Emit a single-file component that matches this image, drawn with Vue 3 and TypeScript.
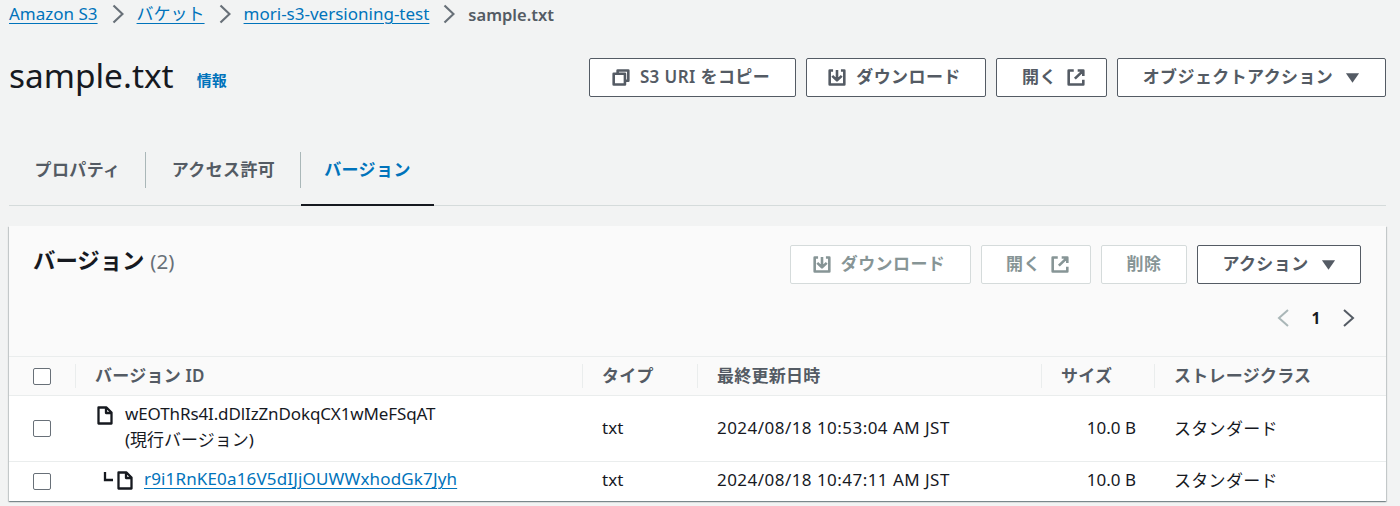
<script setup lang="ts">
interface Row { id: string; current: boolean; date: string }
const rows: Row[] = [
  { id: 'wEOThRs4I.dDlIzZnDokqCX1wMeFSqAT', current: true, date: '2024/08/18 10:53:04 AM JST' },
  { id: 'r9i1RnKE0a16V5dIJjOUWWxhodGk7Jyh', current: false, date: '2024/08/18 10:47:11 AM JST' },
]
</script>

<template>
  <div class="page">
    <nav class="crumbs">
      <a class="crumb">Amazon S3</a>
      <svg class="sep" viewBox="0 0 12 20"><path d="M1.500 1.500L10.500 10l-9 8.500" /></svg>
      <a class="crumb">バケット</a>
      <svg class="sep" viewBox="0 0 12 20"><path d="M1.500 1.500L10.500 10l-9 8.500" /></svg>
      <a class="crumb">mori-s3-versioning-test</a>
      <svg class="sep" viewBox="0 0 12 20"><path d="M1.500 1.500L10.500 10l-9 8.500" /></svg>
      <span class="crumb-current">sample.txt</span>
    </nav>

    <header class="head">
      <div class="title-wrap">
        <h1>sample.txt</h1>
        <a class="info">情報</a>
      </div>
      <div class="actions">
        <button class="btn w-copy">
          <svg class="ic" viewBox="0 0 16 16" preserveAspectRatio="none"><path d="M5 4.500V1.500h9.500V11H11.500M1.500 4.500h10v10h-10z" /></svg>
          <span>S3 URI をコピー</span>
        </button>
        <button class="btn w-dl">
          <svg class="ic" viewBox="0 0 16 16" preserveAspectRatio="none"><path d="M4.500 1.500h-3v13h13v-13h-3M8 1v9.500M3.800 6.500L8 10.700l4.200-4.200" /></svg>
          <span>ダウンロード</span>
        </button>
        <button class="btn w-open">
          <span>開く</span>
          <svg class="ic" viewBox="0 0 16 16" preserveAspectRatio="none"><path d="M6 1.500H1.500v13h13V10M9.500 1.500h5v5M14 2L7 9" /></svg>
        </button>
        <button class="btn w-obj">
          <span>オブジェクトアクション</span>
          <svg class="caret" viewBox="0 0 16 10"><path d="M1 0h14L8 10z" /></svg>
        </button>
      </div>
    </header>

    <div class="tabs">
      <div class="tab tab-a"><span>プロパティ</span></div>
      <div class="tab tab-b"><span>アクセス許可</span></div>
      <div class="tab tab-c active"><span>バージョン</span></div>
    </div>

    <section class="card">
      <div class="card-head">
        <h2>バージョン <span class="count">(2)</span></h2>
        <div class="card-actions">
          <button class="btn off w-dl2">
            <svg class="ic" viewBox="0 0 16 16" preserveAspectRatio="none"><path d="M4.500 1.500h-3v13h13v-13h-3M8 1v9.500M3.800 6.500L8 10.700l4.200-4.200" /></svg>
            <span>ダウンロード</span>
          </button>
          <button class="btn off w-open2">
            <span>開く</span>
            <svg class="ic" viewBox="0 0 16 16" preserveAspectRatio="none"><path d="M6 1.500H1.500v13h13V10M9.500 1.500h5v5M14 2L7 9" /></svg>
          </button>
          <button class="btn off w-del"><span>削除</span></button>
          <button class="btn w-act">
            <span>アクション</span>
            <svg class="caret" viewBox="0 0 16 10"><path d="M1 0h14L8 10z" /></svg>
          </button>
        </div>
      </div>

      <div class="pager">
        <svg class="pg off-pg" viewBox="0 0 14 20"><path d="M12 2L3 10l9 8" /></svg>
        <span class="pg-num">1</span>
        <svg class="pg" viewBox="0 0 14 20"><path d="M2 2l9 8-9 8" /></svg>
      </div>

      <div class="grid thead">
        <div class="cell sel"><i class="check"></i></div>
        <div class="cell th first">バージョン ID</div>
        <div class="cell th">タイプ</div>
        <div class="cell th">最終更新日時</div>
        <div class="cell th">サイズ</div>
        <div class="cell th">ストレージクラス</div>
      </div>

      <div v-for="r in rows" :key="r.id" class="grid row" :class="{ tall: r.current }">
        <div class="cell sel"><i class="check"></i></div>
        <div class="cell idcell" :class="{ child: !r.current }">
          <svg v-if="!r.current" class="elbow" viewBox="0 0 10 10"><path d="M2 0v8h8" /></svg>
          <svg class="file" viewBox="0 0 16 19"><path d="M1.500 1.500h8l5 5v11h-13zM9 1.500v5.500h5.500" /></svg>
          <div v-if="r.current" class="idtext">{{ r.id }}<br /><span class="cur">(現行バージョン)</span></div>
          <a v-else class="idlink">{{ r.id }}</a>
        </div>
        <div class="cell td">txt</div>
        <div class="cell td date">{{ r.date }}</div>
        <div class="cell td size">10.0 B</div>
        <div class="cell td cls">スタンダード</div>
      </div>
    </section>
  </div>
</template>

<style>
html, body { margin: 0; background: #f2f3f3; }
</style>

<style scoped>
.page {
  width: 1400px;
  height: 506px;
  box-sizing: border-box;
  padding: 0 14px 0 9px;
  background: #f2f3f3;
  overflow: hidden;
  color: #16191f;
  font-family: "Noto Sans", "Noto Sans CJK JP", sans-serif;
  font-size: 17px;
}
.crumbs { display: flex; align-items: center; height: 28px; }
.crumb { color: #0073bb; text-decoration: underline; text-underline-offset: 3px; text-decoration-thickness: 1px; line-height: 22px; }
.crumb-current { color: #545b64; font-weight: 600; font-size: 16.500px; }
.sep { width: 12px; height: 20px; margin: 0 13px 0 14px; fill: none; stroke: #687078; stroke-width: 2.200; }
.head { display: flex; justify-content: space-between; align-items: flex-start; padding-top: 30px; height: 68px; }
.title-wrap { display: flex; align-items: flex-start; }
h1 { margin: -2px 0 0; font-size: 33.400px; font-weight: 400; line-height: 38px; }
.info { color: #0073bb; font-size: 15px; font-weight: 600; line-height: 20px; margin: 12px 0 0 23px; }
.actions { display: flex; gap: 10px; }
.btn {
  height: 39px;
  box-sizing: border-box;
  display: flex;
  align-items: center;
  justify-content: center;
  gap: 10px;
  padding: 0 0 5px;
  border: 1px solid #545b64;
  border-radius: 2px;
  background: #fff;
  color: #545b64;
  font: 600 17px "Noto Sans", "Noto Sans CJK JP", sans-serif;
  letter-spacing: 0.400px;
}
.off { color: #879596; border-color: #d5dbdb; }
.ic { width: 18px; height: 17px; margin-top: 5px; fill: none; stroke: currentColor; stroke-width: 2.300; stroke-linejoin: round; flex: none; }
.caret { width: 15px; height: 10px; margin: 5px 0 0 2px; fill: #545b64; flex: none; }
.w-copy { width: 207px; padding-right: 3px; }
.w-dl { width: 180px; padding-right: 3px; }
.w-dl2 { width: 181px; padding-right: 3px; }
.w-open { width: 111px; padding-left: 4px; }
.w-open2 { width: 110px; padding-left: 3px; }
.w-obj { width: 269px; }
.w-del { width: 86px; }
.w-act { width: 164px; }
.tabs { display: flex; height: 56px; margin-top: 12px; border-bottom: 1px solid #d5dbdb; padding-top: 11px; }
.tab { display: flex; align-items: center; justify-content: center; padding-bottom: 18px; color: #545b64; font-weight: 600; font-size: 17px; letter-spacing: 0.400px; position: relative; box-sizing: border-box; height: 57px; }
.tab-a { width: 137px; }
.tab-b { width: 155px; }
.tab-c { width: 133px; }
.tab-a::after, .tab-b::after {
  content: "";
  position: absolute;
  right: 0;
  top: 3px;
  height: 36px;
  width: 1px;
  background: #aab7b8;
}
.active { color: #0073bb; border-bottom: 2px solid #16191f; padding-bottom: 16px; }
.card {
  margin-top: 20px;
  width: 1377px;
  height: 275px;
  box-sizing: border-box;
  background: #fafafa;
  box-shadow: 0 1px 1px 0 rgba(0, 28, 36, 0.3), 1px 1px 1px 0 rgba(0, 28, 36, 0.15), -1px 1px 1px 0 rgba(0, 28, 36, 0.15);
}
.card-head { display: flex; justify-content: space-between; padding: 19px 25px 0 24px; height: 58px; }
h2 { margin: 0; font-size: 22.400px; font-weight: 700; line-height: 32px; height: 32px; }
.count { font-size: 20.500px; font-weight: 400; color: #687078; }
.card-actions { display: flex; gap: 10px; }
.pager { display: flex; align-items: center; justify-content: flex-end; gap: 20px; height: 26px; padding: 0 30px 0 0; margin-top: 2px; }
.pg { width: 14px; height: 20px; fill: none; stroke: #545b64; stroke-width: 2; flex: none; }
.off-pg { stroke: #aab7b8; }
.pg-num { font-size: 15.500px; font-weight: 700; width: 12px; text-align: center; }
.grid { display: grid; grid-template-columns: 66px 507px 115px 344px 113px 1fr; border-top: 1px solid #eaeded; background: #fff; }
.thead { margin-top: 25px; height: 39px; box-sizing: border-box; background: #fafafa; }
.row { box-sizing: border-box; }
.row.tall { height: 66px; }
.row + .row { height: 40px; }
.cell { display: flex; align-items: center; padding-left: 20px; padding-bottom: 4px; position: relative; box-sizing: border-box; }
.tall .td { padding-bottom: 2px; }
.sel { padding-left: 24px; padding-bottom: 1px; }
.thead .sel { padding-bottom: 0; }
.check { display: block; width: 18px; height: 17px; box-sizing: border-box; border: 1px solid #687078; border-radius: 2px; background: #fff; }
.th { font-weight: 600; color: #545b64; letter-spacing: 0.250px; padding-bottom: 3px; }
.th::before { content: ""; position: absolute; left: 0; top: 7px; height: 24px; width: 1px; background: #eaeded; }
.td { color: #16191f; }
.date { letter-spacing: 0.460px; }
.cls { letter-spacing: 0.300px; }
.size { justify-content: flex-end; padding-right: 18px; padding-left: 0; }
.idcell { gap: 12px; align-items: flex-start; padding-top: 5px; padding-left: 22px; line-height: 26px; }
.idcell.child { gap: 0; padding-top: 4px; padding-left: 28px; }
.idtext { color: #16191f; letter-spacing: -0.120px; }
.cur { letter-spacing: 0; }
.file { width: 16px; height: 19px; margin-top: 5px; fill: none; stroke: #16191f; stroke-width: 2.300; stroke-linejoin: round; flex: none; }
.elbow { width: 10px; height: 10px; margin: 6px 4px 0 0; fill: none; stroke: #16191f; stroke-width: 2.300; flex: none; }
.child .file { margin-right: 11px; }
.idlink { color: #0073bb; text-decoration: underline; text-underline-offset: 3px; text-decoration-thickness: 1px; letter-spacing: 0.150px; }
</style>
